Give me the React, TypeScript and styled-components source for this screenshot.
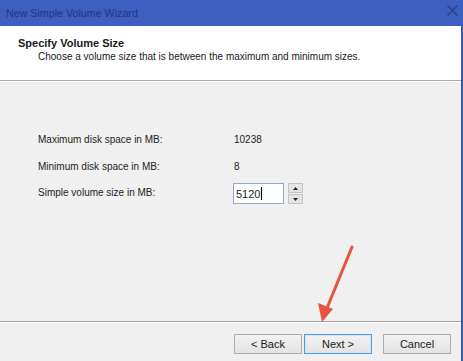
import React from "react"
import styled, { createGlobalStyle } from "styled-components"

const Global = createGlobalStyle`
    html, body {
        margin: 0;
        padding: 0;
        background: #f0f0f0;
    }
    body {
        font-family: "Liberation Sans", Arial, sans-serif;
        font-size: 10px;
        color: #1a1a1a;
    }
`

const Window = styled.div`
    position: relative;
    width: 463px;
    height: 361px;
    display: flex;
    flex-direction: column;
    overflow: hidden;
`

const TitleBar = styled.div`
    height: 26px;
    flex: 0 0 26px;
    background: #3d5fc2;
    display: flex;
    align-items: center;
    justify-content: space-between;
    padding: 0 5px 0 6px;
    color: #22357d;
    font-size: 10.7px;
`

const CloseGlyph = styled.svg`
    width: 11px;
    height: 11px;
    margin-top: -6px;
`

const Frame = styled.div`
    flex: 1;
    display: flex;
    flex-direction: column;
    border-right: 2px solid #3a58b0;
`

const Header = styled.div`
    height: 55px;
    background: #ffffff;
    border-bottom: 1px solid #a8a8a8;
    padding: 11px 0 0 18px;
    box-sizing: border-box;

    h1 {
        margin: 0;
        font-size: 11px;
        font-weight: bold;
        line-height: 13px;
    }
    p {
        margin: 0 0 0 20px;
        line-height: 13px;
    }
`

const Body = styled.div`
    flex: 1;
    border-top: 1px solid #ffffff;
    padding: 43px 0 0 38px;
`

const Fields = styled.div`
    display: grid;
    grid-template-columns: 196px auto;
    grid-template-rows: 28px 26px 26px;
    align-items: center;
    color: #222;
`

const Spin = styled.div`
    display: flex;
    align-items: center;
    gap: 4px;
    margin-left: -1px;
    margin-top: 3px;
`

const Input = styled.div`
    width: 47px;
    height: 19px;
    border: 1px solid #8fa9d6;
    background: #fff;
    display: flex;
    align-items: center;
    padding-left: 2px;
    box-sizing: content-box;
    font-size: 11px;
`

const Caret = styled.span`
    display: inline-block;
    width: 1px;
    height: 13px;
    background: #000;
    margin-left: 1px;
`

const Arrows = styled.div`
    display: flex;
    flex-direction: column;
    gap: 1px;
`

const ArrowBtn = styled.div`
    width: 13px;
    height: 8px;
    background: #e4e4e4;
    border: 1px solid #c4c4c4;
    display: flex;
    align-items: center;
    justify-content: center;
`

const Footer = styled.div`
    height: 40px;
    border-top: 1px solid #a0a0a0;
    box-shadow: inset 0 1px 0 #ffffff;
    display: flex;
    justify-content: flex-end;
    align-items: flex-start;
    padding: 12px 10px 0 0;
    box-sizing: border-box;
`

const Button = styled.button<{ $primary?: boolean; $gap?: number }>`
    width: 68px;
    height: 20px;
    margin-left: ${p => p.$gap ?? 0}px;
    font-family: "Liberation Sans", Arial, sans-serif;
    font-size: 11px;
    color: #1a1a1a;
    background: linear-gradient(#f2f2f2, #e3e3e3);
    border: 1px solid ${p => (p.$primary ? "#5b9bd8" : "#acacac")};
    box-shadow: ${p => (p.$primary ? "inset 0 0 0 1px #cde3f7" : "none")};
    padding: 0;
`

const Pointer = styled.svg`
    position: absolute;
    left: 0;
    top: 0;
    pointer-events: none;
`

export default function App() {
    return (
        <Window>
            <Global />
            <TitleBar>
                <span>New Simple Volume Wizard</span>
                <CloseGlyph viewBox="0 0 11 11">
                    <path d="M0.5 0.5 L10.5 10.5 M10.5 0.5 L0.5 10.5" stroke="#2c3f7c" strokeWidth="1.2" />
                </CloseGlyph>
            </TitleBar>
            <Frame>
                <Header>
                    <h1>Specify Volume Size</h1>
                    <p>Choose a volume size that is between the maximum and minimum sizes.</p>
                </Header>
                <Body>
                    <Fields>
                        <span>Maximum disk space in MB:</span>
                        <span>10238</span>
                        <span>Minimum disk space in MB:</span>
                        <span>8</span>
                        <span>Simple volume size in MB:</span>
                        <Spin>
                            <Input>5120<Caret /></Input>
                            <Arrows>
                                <ArrowBtn>
                                    <svg width="5" height="3" viewBox="0 0 5 3"><path d="M0 3 L2.5 0 L5 3Z" fill="#222" /></svg>
                                </ArrowBtn>
                                <ArrowBtn>
                                    <svg width="5" height="3" viewBox="0 0 5 3"><path d="M0 0 L2.5 3 L5 0Z" fill="#222" /></svg>
                                </ArrowBtn>
                            </Arrows>
                        </Spin>
                    </Fields>
                </Body>
                <Footer>
                    <Button>&lt; Back</Button>
                    <Button $primary $gap={2}>Next &gt;</Button>
                    <Button $gap={11}>Cancel</Button>
                </Footer>
            </Frame>
            <Pointer width="463" height="361" viewBox="0 0 463 361">
                <line x1="352" y1="247" x2="327" y2="308" stroke="#e8543f" strokeWidth="3" strokeLinecap="round" />
                <path d="M322 322 L318 303 L333 309 Z" fill="#e8543f" />
            </Pointer>
        </Window>
    )
}
